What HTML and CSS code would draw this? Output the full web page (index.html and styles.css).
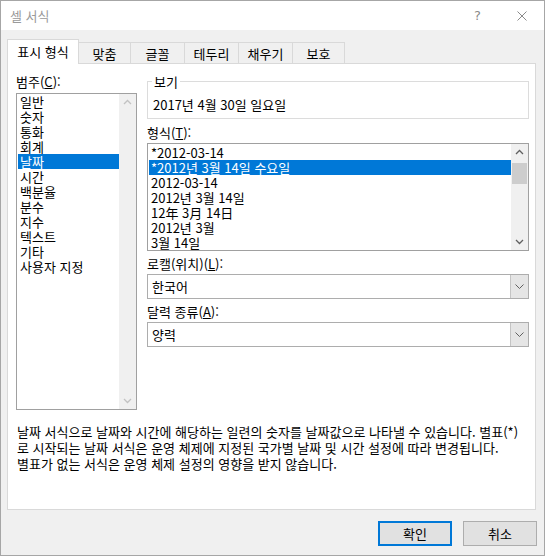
FILE: index.html
```html
<!DOCTYPE html>
<html lang="ko">
<head>
<meta charset="utf-8">
<title>셀 서식</title>
<link rel="stylesheet" href="styles.css">
</head>
<body>
<div class="window">
  <div class="titlebar">
    <span class="title">셀 서식</span>
    <span class="help">?</span>
    <svg class="close" width="10" height="10" viewBox="0 0 10 10"><path d="M0.5 0.5 L9.5 9.5 M9.5 0.5 L0.5 9.5" stroke="#8a8a8a" stroke-width="1" fill="none"/></svg>
  </div>
  <div class="content">
    <div class="tabs">
      <div class="tab active w72">표시 형식</div>
      <div class="tab w53">맞춤</div>
      <div class="tab w55">글꼴</div>
      <div class="tab w55">테두리</div>
      <div class="tab w55">채우기</div>
      <div class="tab w53">보호</div>
    </div>
    <div class="panel">
      <div class="columns">
        <div class="leftcol">
          <div class="label">범주(<u>C</u>):</div>
          <div class="listbox category">
            <div class="items">
              <div class="item">일반</div>
              <div class="item">숫자</div>
              <div class="item">통화</div>
              <div class="item">회계</div>
              <div class="item selected">날짜</div>
              <div class="item">시간</div>
              <div class="item">백분율</div>
              <div class="item">분수</div>
              <div class="item">지수</div>
              <div class="item">텍스트</div>
              <div class="item">기타</div>
              <div class="item">사용자 지정</div>
            </div>
            <div class="scrollbar">
              <svg class="arrow" width="17" height="17" viewBox="0 0 17 17"><path d="M5 10 L8.5 6.5 L12 10" stroke="#c2c2c2" stroke-width="1.3" fill="none"/></svg>
              <div class="track"></div>
              <svg class="arrow" width="17" height="17" viewBox="0 0 17 17"><path d="M5 7 L8.5 10.5 L12 7" stroke="#c2c2c2" stroke-width="1.3" fill="none"/></svg>
            </div>
          </div>
        </div>
        <div class="rightcol">
          <fieldset class="sample">
            <legend>보기</legend>
            <div class="sampletext">2017년 4월 30일 일요일</div>
          </fieldset>
          <div class="label gap6">형식(<u>T</u>):</div>
          <div class="listbox formats">
            <div class="items">
              <div class="item">*2012-03-14</div>
              <div class="item selected">*2012년 3월 14일 수요일</div>
              <div class="item">2012-03-14</div>
              <div class="item">2012년 3월 14일</div>
              <div class="item">12年 3月 14日</div>
              <div class="item">2012년 3월</div>
              <div class="item">3월 14일</div>
            </div>
            <div class="scrollbar">
              <svg class="arrow" width="17" height="17" viewBox="0 0 17 17"><path d="M5 10 L8.5 6.5 L12 10" stroke="#606060" stroke-width="1.3" fill="none"/></svg>
              <div class="track"><div class="thumb"></div></div>
              <svg class="arrow" width="17" height="17" viewBox="0 0 17 17"><path d="M5 7 L8.5 10.5 L12 7" stroke="#606060" stroke-width="1.3" fill="none"/></svg>
            </div>
          </div>
          <div class="label gap5">로캘(위치)(<u>L</u>):</div>
          <div class="combo">
            <span class="combotext">한국어</span>
            <span class="combobtn"><svg width="9" height="5" viewBox="0 0 9 5"><path d="M0.5 0.5 L4.5 4.5 L8.5 0.5" stroke="#606060" stroke-width="1" fill="none"/></svg></span>
          </div>
          <div class="label gap5">달력 종류(<u>A</u>):</div>
          <div class="combo">
            <span class="combotext">양력</span>
            <span class="combobtn"><svg width="9" height="5" viewBox="0 0 9 5"><path d="M0.5 0.5 L4.5 4.5 L8.5 0.5" stroke="#606060" stroke-width="1" fill="none"/></svg></span>
          </div>
        </div>
      </div>
      <p class="desc">날짜 서식으로 날짜와 시간에 해당하는 일련의 숫자를 날짜값으로 나타낼 수 있습니다. 별표(*)<br>로 시작되는 날짜 서식은 운영 체제에 지정된 국가별 날짜 및 시간 설정에 따라 변경됩니다.<br>별표가 없는 서식은 운영 체제 설정의 영향을 받지 않습니다.</p>
    </div>
    <div class="buttons">
      <div class="button default">확인</div>
      <div class="button">취소</div>
    </div>
  </div>
</div>
</body>
</html>
```

FILE: styles.css
```css
* { box-sizing: border-box; }
html, body { margin: 0; padding: 0; }
body {
  font-family: "Noto Sans CJK KR", "Noto Sans", sans-serif;
  font-size: 13px;
  color: #000;
  background: #fff;
}
.window {
  width: 545px;
  height: 556px;
  border: 1px solid #a6a6a6;
  display: flex;
  flex-direction: column;
  background: #f0f0f0;
}
.titlebar {
  height: 29px;
  background: #fff;
  display: flex;
  align-items: center;
  flex-shrink: 0;
}
.title {
  margin-left: 9px;
  color: #9a9a9a;
  line-height: 15px;
  flex: 1;
}
.help {
  color: #8a8a8a;
  font-family: "DejaVu Sans", sans-serif;
  font-size: 13px;
  line-height: 15px;
  margin-right: 36px;
}
.close { margin-right: 17px; }
.content {
  flex: 1;
  padding: 9px 8px 0 6px;
  display: flex;
  flex-direction: column;
}
.tabs {
  display: flex;
  align-items: flex-end;
  height: 24px;
}
.tab {
  height: 21px;
  border: 1px solid #d9d9d9;
  border-bottom: none;
  margin-left: -1px;
  display: flex;
  align-items: center;
  justify-content: center;
  line-height: 15px;
  background: #f0f0f0;
}
.tab.active {
  margin-left: 0;
  height: 25px;
  margin-bottom: -1px;
  background: #fff;
  position: relative;
  z-index: 2;
  padding-bottom: 1px;
}
.w72 { width: 72px; }
.w53 { width: 53px; }
.w55 { width: 55px; }
.panel {
  width: 529px;
  height: 447px;
  background: #fff;
  border: 1px solid #d9d9d9;
  padding: 10px 6px 0 8px;
  position: relative;
  z-index: 1;
}
.columns {
  display: flex;
  gap: 10px;
}
.leftcol { width: 121px; }
.rightcol { width: 382px; }
.label { line-height: 15px; height: 15px; white-space: nowrap; }
.label u { text-underline-offset: 1px; }
.gap6 { margin-top: 6px; }
.gap5 { margin-top: 5px; }
.listbox {
  border: 1px solid #a0a0a0;
  display: flex;
  background: #fff;
}
.category {
  margin-top: 4px;
  height: 317px;
}
.formats {
  margin-top: 3px;
  height: 108px;
  padding-top: 1px;
}
.items {
  flex: 1;
  padding-left: 1px;
}
.item {
  height: 15px;
  line-height: 15px;
  padding-left: 2px;
  white-space: nowrap;
}
.item.selected {
  background: #0078d7;
  color: #fff;
}
.scrollbar {
  width: 17px;
  background: #f0f0f0;
  display: flex;
  flex-direction: column;
}
.formats .scrollbar { margin-top: -1px; }
.arrow { display: block; flex-shrink: 0; }
.track {
  flex: 1;
  padding: 2px 1px 0 1px;
}
.thumb {
  height: 21px;
  background: #cdcdcd;
}
.sample {
  margin: 0;
  border: 1px solid #dcdcdc;
  padding: 0 8px 6px 4px;
  min-width: 0;
}
.sample legend {
  padding: 0 2px;
  line-height: 15px;
}
.sampletext {
  margin-top: 8px;
  line-height: 15px;
  padding-left: 1px;
  white-space: nowrap;
}
.combo {
  margin-top: 3px;
  height: 25px;
  border: 1px solid #adadad;
  display: flex;
  align-items: stretch;
  background: #fff;
}
.combotext {
  flex: 1;
  padding-left: 4px;
  line-height: 23px;
}
.combobtn {
  width: 18px;
  background: #e5e5e5;
  border-left: 1px solid #c4c4c4;
  display: flex;
  align-items: center;
  justify-content: center;
}
.desc {
  margin: 14px 0 0 1px;
  line-height: 16px;
  white-space: nowrap;
}
.buttons {
  display: flex;
  justify-content: flex-end;
  gap: 11px;
  margin-top: 11px;
  margin-right: -1px;
}
.button {
  width: 74px;
  height: 25px;
  background: #e1e1e1;
  border: 1px solid #adadad;
  display: flex;
  align-items: center;
  justify-content: center;
  line-height: 15px;
}
.button.default {
  border: 2px solid #0078d7;
}
```
